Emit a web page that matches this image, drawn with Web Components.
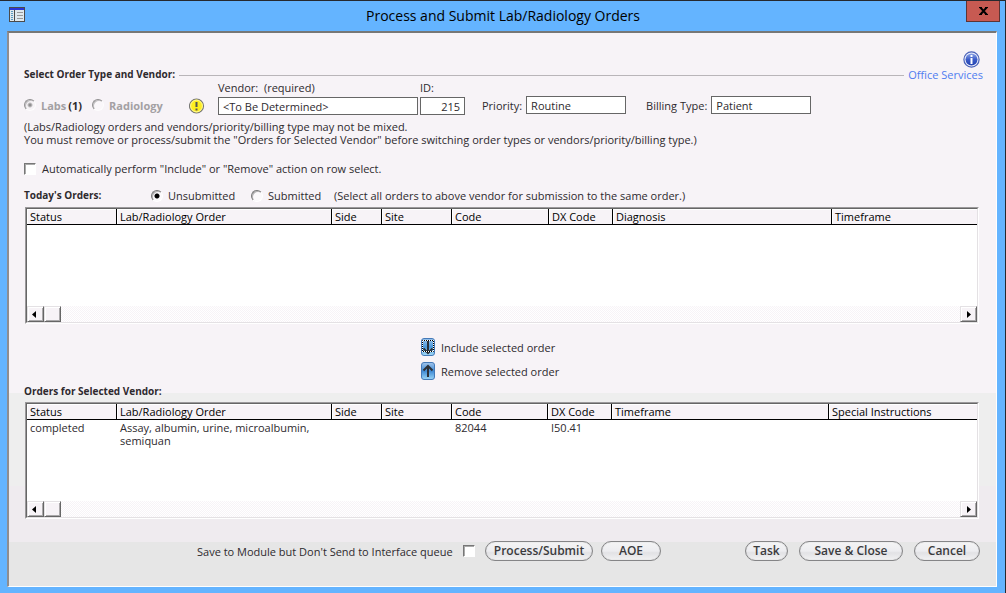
<!DOCTYPE html>
<html lang="en">
<head>
<meta charset="utf-8">
<title>Process and Submit Lab/Radiology Orders</title>
<style>
  body {
    margin: 0;
    min-height: 100vh;
    display: flex;
    font-family: "Open Sans", "Noto Sans", sans-serif;
    font-size: 11px;
    line-height: 13px;
    color: #2e2a2e;
  }
</style>
</head>
<body>
<lab-window caption="Process and Submit Lab/Radiology Orders">
  <order-header></order-header>
  <order-vendor></order-vendor>
  <order-filter></order-filter>
  <order-table
    columns="Status:90,Lab/Radiology Order:215,Side:50,Site:70,Code:97,DX Code:64,Diagnosis:219,Timeframe"
    rows="[]"></order-table>
  <order-actions></order-actions>
  <order-table
    caption="Orders for Selected Vendor:"
    columns="Status:90,Lab/Radiology Order:215,Side:50,Site:70,Code:96,DX Code:64,Timeframe:217,Special Instructions"
    rows='[["completed","Assay, albumin, urine, microalbumin, semiquan","","","82044","I50.41","",""]]'></order-table>
  <order-footer></order-footer>
</lab-window>

<script>
// attach an open shadow root filled from a template
function render(el, html) {
  const template = document.createElement('template')
  template.innerHTML = html
  el.attachShadow({ mode: 'open' }).appendChild(template.content.cloneNode(true))
}

// sunken tick boxes and radios, shared by several elements
const controls = `
  * { box-sizing: border-box; }
  input, button { font: inherit; color: inherit; margin: 0; }
  label { white-space: nowrap; }
  input[type=checkbox] {
    appearance: none;
    flex: none;
    width: 12px;
    height: 12px;
    background: #fff;
    border: 1px solid #fff;
    border-top-color: #777;
    border-left-color: #777;
    box-shadow: inset 1px 1px #aaa;
  }
  input[type=radio] {
    appearance: none;
    flex: none;
    width: 12px;
    height: 12px;
    border-radius: 50%;
    background: #fbf9fb;
    border: 1px solid;
    border-color: #777 #fff #fff #777;
    box-shadow: inset 1px 1px #b5b3b5;
  }
  input[type=radio]:checked {
    background: radial-gradient(circle at center, #000 2px, #fbf9fb 3px);
  }
  input[type=radio]:disabled { opacity: .8; }
  input[type=radio]:disabled:checked {
    background: radial-gradient(circle at center, #777 1px, #f6f3f6 3px);
  }
`

// window frame with its title bar
class LabWindow extends HTMLElement {
  constructor() {
    super();
    render(this, `
<style>
  :host {
    box-sizing: border-box;
    flex: 1;
    min-width: 0;
    display: flex;
    flex-direction: column;
    padding: 0 5px 6px 7px;
    background: #64b4ff;
    border-top: 1px solid #26292e;
    border-right: 1px solid #26292e;
  }
  header {
    display: grid;
    grid-template-columns: 33px 1fr 34px;
    align-items: start;
    height: 30px;
  }
  header svg { margin: 6px 2px; }
  h1 {
    margin: 0;
    text-align: center;
    font-size: 14px;
    font-weight: 400;
    line-height: 30px;
    color: #000;
  }
  button {
    height: 21px;
    padding: 0;
    background: #c75a52;
    border: 1px solid #5d3434;
    border-top: 0;
    display: grid;
    place-items: center;
  }
  button svg { margin: 0; }
  main {
    flex: 1;
    margin-right: 3px;
    padding: 0 13px 25px 15px;
    border: 1px solid #6b686b;
    border-width: 2px 1px 1px 2px;
    border-color: #777 #fff #fff #8f8d90;
    background: linear-gradient(#f7f3f7 360px, #eeeeee 360px 453px, #efebef 453px 509px, #e6e6e6 509px);
  }
</style>
<header>
  <svg width="16" height="16" viewBox="0 0 16 16" shape-rendering="crispEdges">
    <path fill="#4b4b4b" d="M0 0h16v15H0z"/>
    <path fill="#2a35d8" d="M1 1h14v2H1z"/>
    <path fill="#dfe9ee" d="M1 3h4v11H1zM6 3h9v11H6z"/>
    <path fill="#5b9bc0" d="M2 4h2v1H2zM2 6h2v1H2zM2 8h2v1H2zM2 10h2v1H2zM2 12h2v1H2z"/>
    <path fill="#999" d="M8 5h6v1H8zM8 8h6v1H8zM8 11h6v1H8z"/>
  </svg>
  <h1></h1>
  <button aria-label="Close"><svg width="9" height="8" viewBox="0 0 9 8"><path d="M1 0l7 8M8 0L1 8" stroke="#000" stroke-width="2"/><path d="M0 .5h3M6 .5h3M0 7.5h3M6 7.5h3" stroke="#000"/></svg></button>
</header>
<main><slot></slot></main>
`);
    this.shadowRoot.querySelector('h1').textContent = this.getAttribute('caption');
  }
}

// section title, rule and services link
class OrderHeader extends HTMLElement {
  constructor() {
    super();
    render(this, `
<style>
  :host {
    display: grid;
    grid-template-columns: auto 1fr auto;
    align-items: end;
    column-gap: 4px;
    padding-top: 18px;
  }
  h2 { margin: 0; font-size: 10px; }
  hr {
    width: 100%;
    margin: 0 0 5px;
    border: 0;
    border-top: 1px solid #b9b5b9;
  }
  div { display: flex; flex-direction: column; align-items: end; }
  svg { margin-right: 3px; }
  a { color: #4f7df0; text-decoration: none; }
</style>
<h2>Select Order Type and Vendor:</h2>
<hr>
<div>
  <svg width="17" height="17" viewBox="0 0 17 17">
    <defs><linearGradient id="g" x1="0" y1="0" x2="0" y2="1"><stop stop-color="#8fa5e6"/><stop offset=".5" stop-color="#3c5cc8"/><stop offset="1" stop-color="#2342b0"/></linearGradient></defs>
    <circle cx="8.5" cy="8.5" r="7.6" fill="#eef1fb" stroke="#4a61b8" stroke-width="1.2"/>
    <circle cx="8.5" cy="8.5" r="6" fill="url(#g)"/>
    <path d="M7.5 4h2v2h-2zM7.5 7h2v6h-2z" fill="#fff"/>
  </svg>
  <a href="#services">Office Services</a>
</div>
`);
  }
}

// order type, vendor fields and the notes below them
class OrderVendor extends HTMLElement {
  constructor() {
    super();
    render(this, `
<style>
  ${controls}
  :host { display: block; }
  .row { display: flex; align-items: end; }
  .types { display: flex; align-items: center; width: 165px; height: 20px; }
  .types label { color: #a3a0a3; font-weight: 700; }
  .types input { margin-right: 5px; }
  .types b { margin: 0 10px 0 2px; }
  .warn { width: 29px; height: 18px; }
  .stack { display: flex; flex-direction: column; gap: 3px; margin-right: 2px; }
  .side { display: flex; align-items: center; gap: 4px; margin: 0 0 1px 15px; }
  .side + .side { margin-left: 20px; }
  input[type=text] {
    width: 100px;
    height: 18px;
    padding: 0 4px;
    background: #fff;
    border: 1px solid #666;
    border-radius: 0;
  }
  input.vendor { width: 200px; }
  input.id { width: 45px; text-align: right; }
  p { margin: 5px 0 16px; }
  .auto { display: flex; align-items: center; gap: 6px; }
</style>
<div class="row">
  <div class="types">
    <input type="radio" id="labs" name="type" checked disabled><label for="labs">Labs</label><b>(1)</b>
    <input type="radio" id="rad" name="type" disabled><label for="rad">Radiology</label>
  </div>
  <svg class="warn" viewBox="0 0 29 18">
    <circle cx="7.5" cy="9" r="7" fill="#ffef1e" stroke="#777" stroke-width="1.2"/>
    <circle cx="7.5" cy="9" r="5.9" fill="none" stroke="#fff9a0"/>
    <path d="M6.5 5h2v5h-2zM6.5 11.500h2v2h-2z" fill="#555"/>
  </svg>
  <div class="stack">
    <label for="vendor">Vendor:&nbsp; (required)</label>
    <input type="text" id="vendor" class="vendor" value="&lt;To Be Determined&gt;">
  </div>
  <div class="stack">
    <label for="id">ID:</label>
    <input type="text" id="id" class="id" value="215">
  </div>
  <div class="side">
    <label for="priority">Priority:</label>
    <input type="text" id="priority" value="Routine">
  </div>
  <div class="side">
    <label for="billing">Billing Type:</label>
    <input type="text" id="billing" value="Patient">
  </div>
</div>
<p>(Labs/Radiology orders and vendors/priority/billing type may not be mixed.<br>
You must remove or process/submit the "Orders for Selected Vendor" before switching order types or vendors/priority/billing type.)</p>
<div class="auto">
  <input type="checkbox" id="auto">
  <label for="auto">Automatically perform "Include" or "Remove" action on row select.</label>
</div>
`);
  }
}

// today's orders: submitted or not
class OrderFilter extends HTMLElement {
  constructor() {
    super();
    render(this, `
<style>
  ${controls}
  :host {
    display: grid;
    grid-template-columns: 127px 100px 83px 1fr;
    align-items: center;
    height: 15px;
    margin: 13px 0 4px;
  }
  h2 { margin: 0; font-size: 10px; }
  div { display: flex; align-items: center; gap: 5px; }
</style>
<h2>Today's Orders:</h2>
<div><input type="radio" id="open" name="state" checked><label for="open">Unsubmitted</label></div>
<div><input type="radio" id="sent" name="state"><label for="sent">Submitted</label></div>
<span>(Select all orders to above vendor for submission to the same order.)</span>
`);
  }
}

// list box with a header row and a horizontal scroll bar
class OrderTable extends HTMLElement {
  constructor() {
    super();
    render(this, `
<style>
  :host { display: block; margin: 0 4px 0 1px; }
  h2 { margin: 0 0 4px -1px; font-size: 10px; line-height: 14px; }
  .box {
    border: 1px solid;
    border-color: #9b999b #fff #fff #9b999b;
  }
  .inner {
    background: #fff;
    border: 1px solid;
    border-color: #666 #e4e1e4 #e4e1e4 #666;
  }
  .view { height: 97px; overflow: hidden; }
  table { width: 100%; table-layout: fixed; border-collapse: separate; border-spacing: 0; }
  th {
    height: 14px;
    padding: 0 0 0 3px;
    background: #f7f3f7;
    border-bottom: 1px solid #000;
    border-right: 1px solid #000;
    box-shadow: inset 1px 1px #fff;
    color: #000;
    font-weight: 400;
    text-align: left;
    line-height: 15px;
    white-space: nowrap;
  }
  th:last-child { border-right: 0; }
  td { padding: 1px 16px 0 3px; vertical-align: top; }
  .bar {
    display: flex;
    justify-content: space-between;
    background: repeating-conic-gradient(#f7f3f7 0 25%, #fff 0 50%) 0 0 / 2px 2px;
  }
  .bar div { display: flex; }
  button {
    width: 17px;
    height: 16px;
    padding: 0;
    display: grid;
    place-items: center;
    background: #f7f3f7;
    border: 1px solid;
    border-color: #e4e1e4 #666 #666 #e4e1e4;
    box-shadow: inset 1px 1px #fff, inset -1px -1px #aaa8aa;
  }
  .left { padding-right: 3px; }
</style>
<h2></h2>
<div class="box"><div class="inner">
  <div class="view"><table><thead><tr></tr></thead><tbody></tbody></table></div>
  <div class="bar">
    <div>
      <button class="left" aria-label="Scroll left"><svg width="4" height="7"><path d="M4 0v7L0 3.500z"/></svg></button>
      <button aria-label="Scroll thumb"></button>
    </div>
    <button aria-label="Scroll right"><svg width="4" height="7"><path d="M0 0v7l4-3.500z"/></svg></button>
  </div>
</div></div>
`);
    const root = this.shadowRoot;
    const caption = this.getAttribute('caption');
    if (caption) {
      root.querySelector('h2').textContent = caption;
    } else {
      root.querySelector('h2').remove();
    }

    // "name:width", the last column takes what is left
    this.getAttribute('columns').split(',').forEach(column => {
      const [name, width] = column.split(':');
      const th = document.createElement('th');
      th.textContent = name;
      if (width) th.style.width = `${width - 4}px`;
      root.querySelector('thead tr').appendChild(th);
    });

    JSON.parse(this.getAttribute('rows')).forEach(row => {
      const tr = root.querySelector('tbody').insertRow();
      row.forEach(text => { tr.insertCell().textContent = text; });
    });
  }
}

// move an order between the two lists
class OrderActions extends HTMLElement {
  constructor() {
    super();
    render(this, `
<style>
  :host {
    display: flex;
    flex-direction: column;
    align-items: start;
    gap: 6px;
    padding: 14px 0 4px 397px;
  }
  button {
    display: flex;
    align-items: center;
    gap: 6px;
    padding: 0;
    background: none;
    border: 0;
    font: inherit;
    color: inherit;
  }
</style>
<button>
  <svg width="14" height="18" viewBox="0 0 14 18">
    <defs><linearGradient id="d" x1="0" y1="0" x2="0" y2="1"><stop stop-color="#9cc4ec"/><stop offset=".5" stop-color="#4a98dc"/><stop offset="1" stop-color="#a5dcf8"/></linearGradient></defs>
    <rect x=".5" y=".5" width="13" height="17" rx="2.500" fill="url(#d)" stroke="#4479b8"/>
    <path d="M7 3v12M2.500 10.500L7 15l4.500-4.500" fill="none" stroke="#2c3038" stroke-width="2"/>
    <rect x="1.500" y="2.500" width="11" height="11" fill="none" stroke="#fff"/>
    <rect x="1.500" y="2.500" width="11" height="11" fill="none" stroke="#000" stroke-dasharray="1 1" stroke-dashoffset=".5"/>
  </svg>
  Include selected order
</button>
<button>
  <svg width="14" height="18" viewBox="0 0 14 18">
    <defs><linearGradient id="u" x1="0" y1="0" x2="0" y2="1"><stop stop-color="#a4c6ec"/><stop offset=".5" stop-color="#3f8ad4"/><stop offset="1" stop-color="#9ad6f8"/></linearGradient></defs>
    <rect x=".5" y=".5" width="13" height="17" rx="2.500" fill="url(#u)" stroke="#4479b8"/>
    <path d="M7 15V4M2.500 8.500L7 4l4.500 4.500" fill="none" stroke="#2c3038" stroke-width="2"/>
  </svg>
  Remove selected order
</button>
`);
  }
}

// rounded push button
class PillButton extends HTMLElement {
  constructor() {
    super();
    render(this, `
<style>
  :host { display: block; }
  button {
    width: 100%;
    height: 20px;
    padding: 0;
    background: linear-gradient(#f4f4f5, #ededf0 50%, #e2e2e5 60%, #f2f2f3);
    border: 1px solid #858587;
    border-radius: 10px;
    box-shadow: inset 0 0 1px #aaa;
    font: 600 12px/16px "Open Sans", sans-serif;
    color: #3b3b3d;
    white-space: nowrap;
  }
</style>
<button><slot></slot></button>
`);
  }
}

// bottom row
class OrderFooter extends HTMLElement {
  constructor() {
    super();
    render(this, `
<style>
  ${controls}
  :host {
    display: flex;
    align-items: center;
    margin: 22px 3px 0 173px;
  }
  label { width: 260px; }
  input[type=checkbox] { margin: 0 10px 0 6px; }
  .process { width: 108px; margin-right: 8px; }
  .aoe { width: 60px; margin-right: auto; }
  .task { width: 43px; }
  .save { width: 104px; margin: 0 11px; }
  .cancel { width: 66px; }
</style>
<label for="queue">Save to Module but Don't Send to Interface queue</label>
<input type="checkbox" id="queue">
<pill-button class="process">Process/Submit</pill-button>
<pill-button class="aoe">AOE</pill-button>
<pill-button class="task">Task</pill-button>
<pill-button class="save">Save &amp; Close</pill-button>
<pill-button class="cancel">Cancel</pill-button>
`);
  }
}

window.customElements.define('pill-button', PillButton)
window.customElements.define('order-header', OrderHeader)
window.customElements.define('order-vendor', OrderVendor)
window.customElements.define('order-filter', OrderFilter)
window.customElements.define('order-table', OrderTable)
window.customElements.define('order-actions', OrderActions)
window.customElements.define('order-footer', OrderFooter)
window.customElements.define('lab-window', LabWindow)
</script>
</body>
</html>
